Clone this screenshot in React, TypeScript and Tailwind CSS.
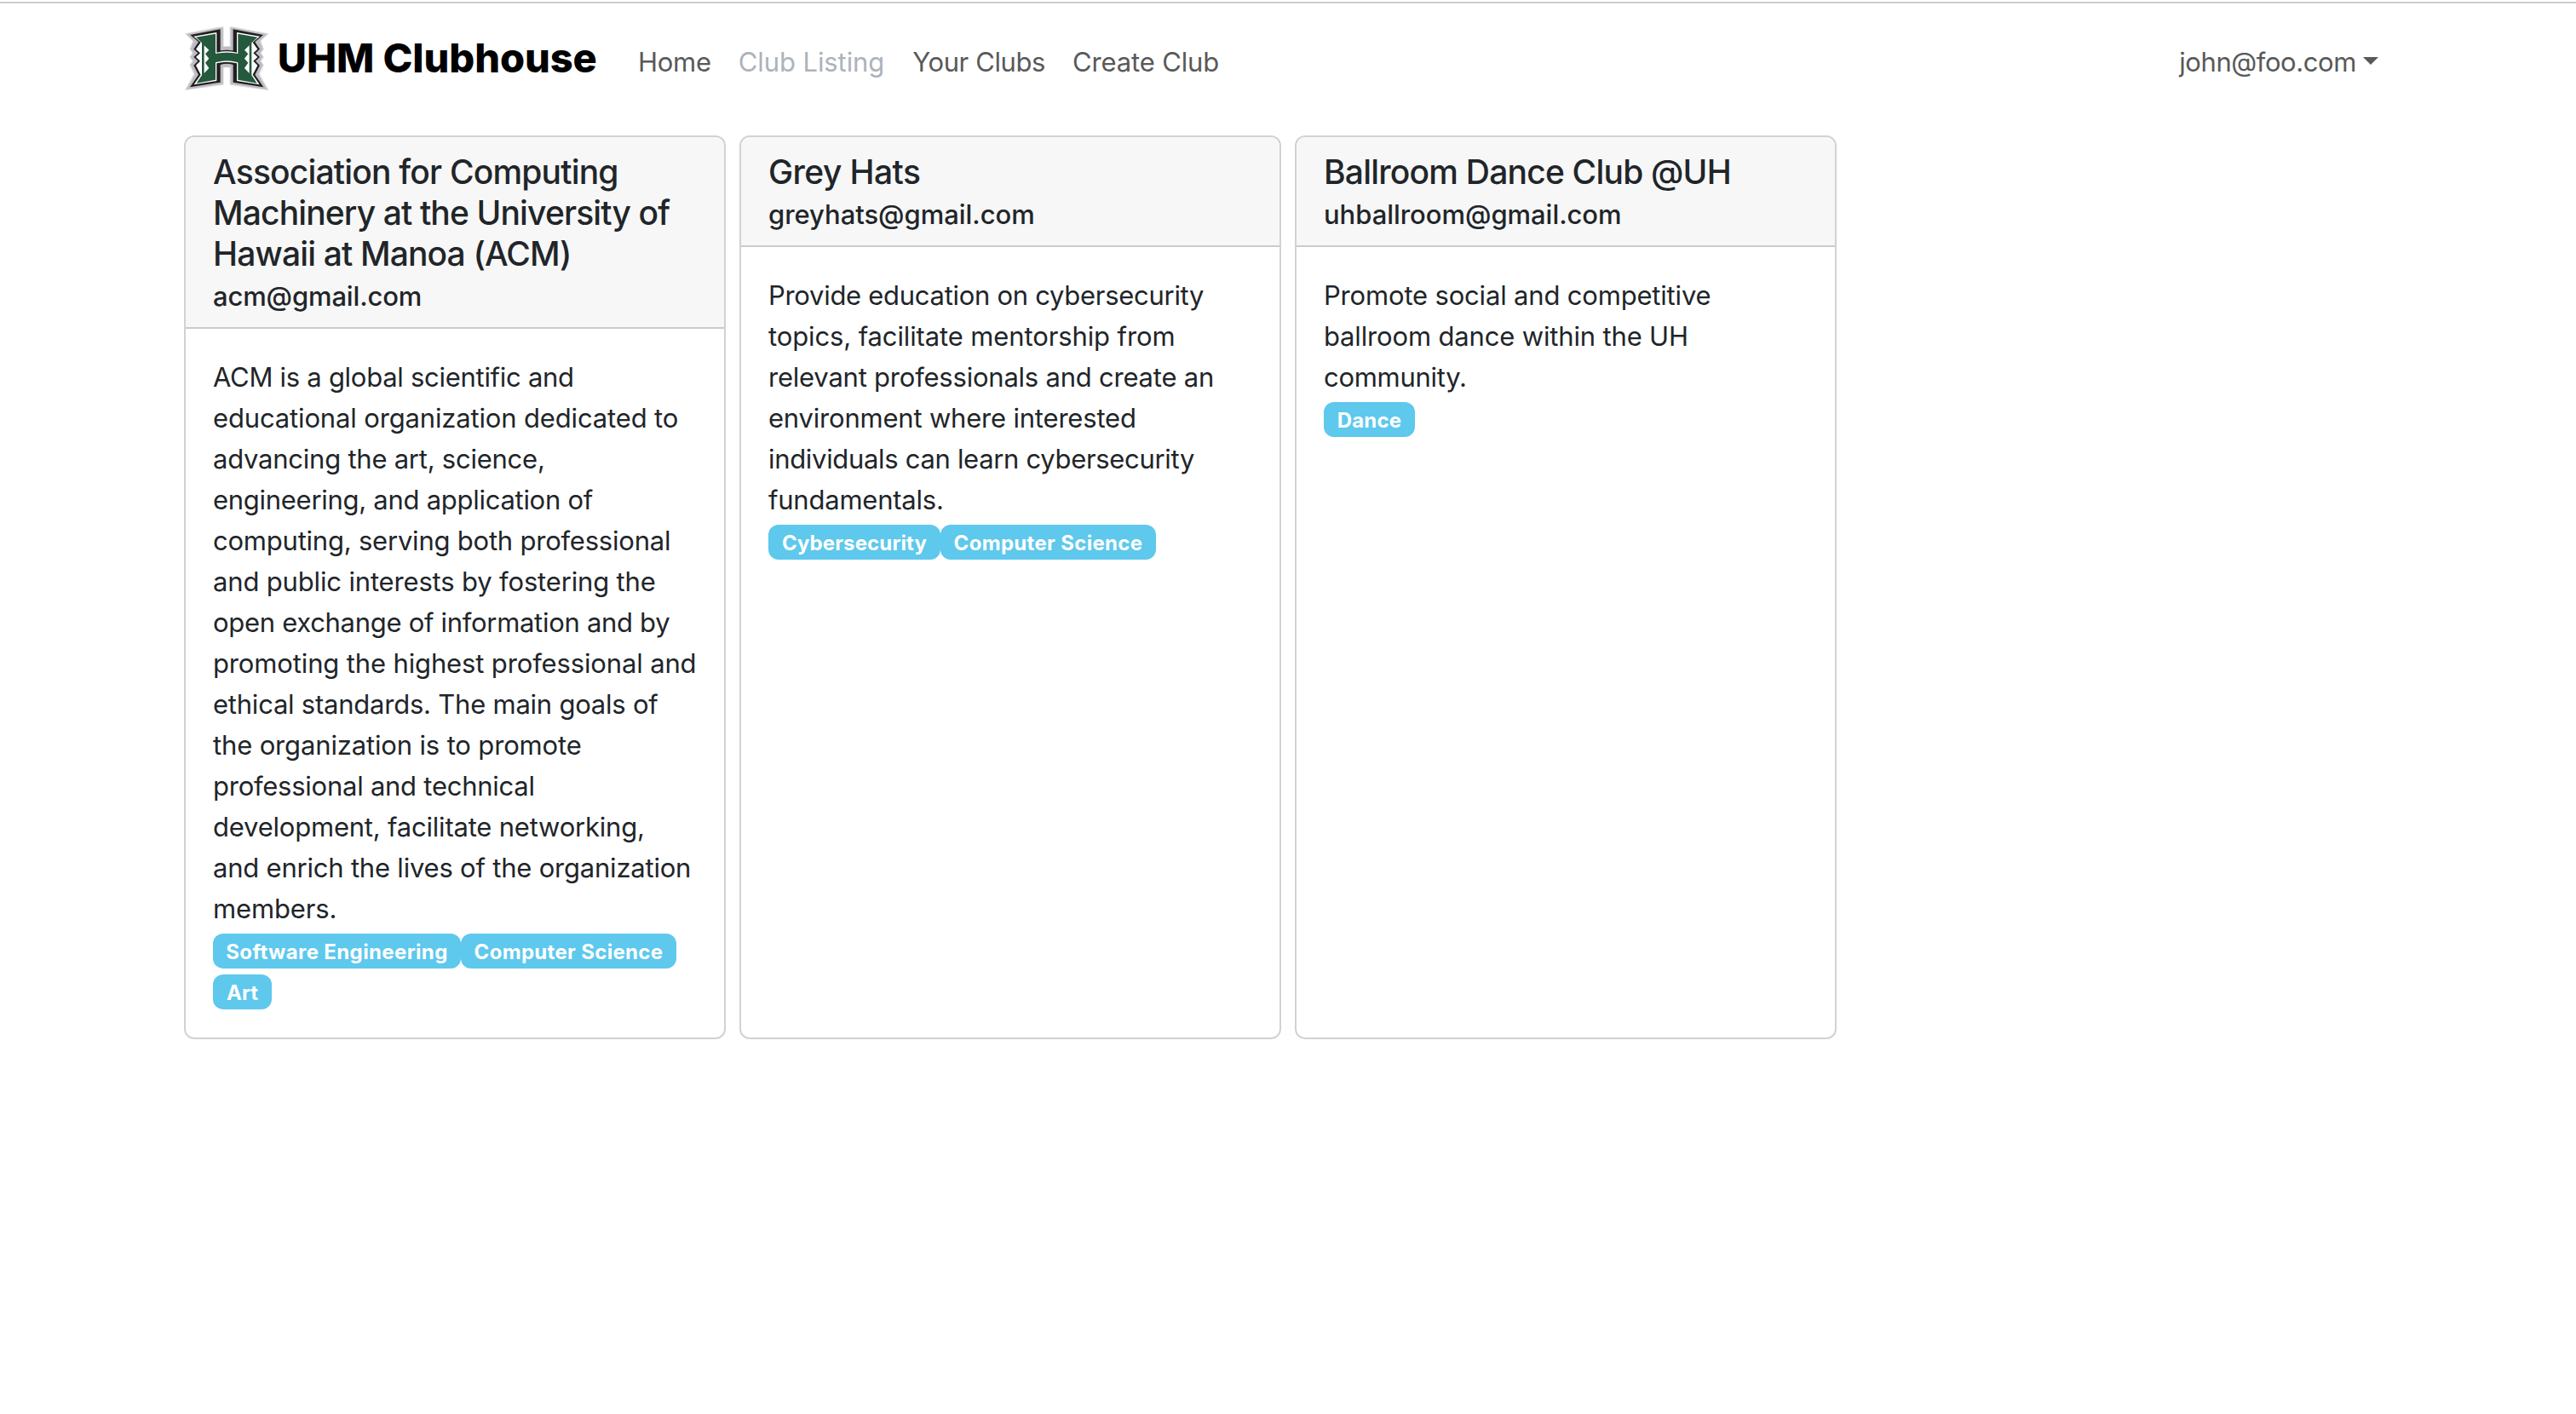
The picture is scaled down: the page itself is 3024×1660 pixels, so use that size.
type Line = { text: string; tracking: string };

type Club = {
  title: Line[];
  email: Line;
  body: Line[];
  tags: (Line & { width: string })[];
};

const clubs: Club[] = [
  {
    title: [
      { text: 'Association for Computing', tracking: 'tracking-[-0.81px]' },
      { text: 'Machinery at the University of', tracking: 'tracking-[-0.87px]' },
      { text: 'Hawaii at Manoa (ACM)', tracking: 'tracking-[-0.86px]' },
    ],
    email: { text: 'acm@gmail.com', tracking: 'tracking-[-0.14px]' },
    body: [
      { text: 'ACM is a global scientific and', tracking: 'tracking-[-0.28px]' },
      { text: 'educational organization dedicated to', tracking: 'tracking-[-0.15px]' },
      { text: 'advancing the art, science,', tracking: 'tracking-[-0.24px]' },
      { text: 'engineering, and application of', tracking: 'tracking-[-0.28px]' },
      { text: 'computing, serving both professional', tracking: 'tracking-[-0.22px]' },
      { text: 'and public interests by fostering the', tracking: 'tracking-[-0.16px]' },
      { text: 'open exchange of information and by', tracking: 'tracking-[-0.3px]' },
      { text: 'promoting the highest professional and', tracking: 'tracking-[-0.14px]' },
      { text: 'ethical standards. The main goals of', tracking: 'tracking-[-0.23px]' },
      { text: 'the organization is to promote', tracking: 'tracking-[-0.15px]' },
      { text: 'professional and technical', tracking: 'tracking-[-0.25px]' },
      { text: 'development, facilitate networking,', tracking: 'tracking-[-0.21px]' },
      { text: 'and enrich the lives of the organization', tracking: 'tracking-[-0.21px]' },
      { text: 'members.', tracking: 'tracking-[-0.14px]' },
    ],
    tags: [
      { text: 'Software Engineering', tracking: 'tracking-[0.37px]', width: 'w-[291px]' },
      { text: 'Computer Science', tracking: 'tracking-[0.32px]', width: 'w-[253px]' },
      { text: 'Art', tracking: 'tracking-[0.07px]', width: 'w-[69px]' },
    ],
  },
  {
    title: [{ text: 'Grey Hats', tracking: 'tracking-[-0.58px]' }],
    email: { text: 'greyhats@gmail.com', tracking: 'tracking-[-0.04px]' },
    body: [
      { text: 'Provide education on cybersecurity', tracking: 'tracking-[-0.29px]' },
      { text: 'topics, facilitate mentorship from', tracking: 'tracking-[-0.12px]' },
      { text: 'relevant professionals and create an', tracking: 'tracking-[-0.22px]' },
      { text: 'environment where interested', tracking: 'tracking-[-0.2px]' },
      { text: 'individuals can learn cybersecurity', tracking: 'tracking-[-0.32px]' },
      { text: 'fundamentals.', tracking: 'tracking-[-0.22px]' },
    ],
    tags: [
      { text: 'Cybersecurity', tracking: 'tracking-[0.12px]', width: 'w-[202px]' },
      { text: 'Computer Science', tracking: 'tracking-[0.32px]', width: 'w-[253px]' },
    ],
  },
  {
    title: [{ text: 'Ballroom Dance Club @UH', tracking: 'tracking-[-0.79px]' }],
    email: { text: 'uhballroom@gmail.com', tracking: 'tracking-[-0.04px]' },
    body: [
      { text: 'Promote social and competitive', tracking: 'tracking-[-0.18px]' },
      { text: 'ballroom dance within the UH', tracking: 'tracking-[-0.16px]' },
      { text: 'community.', tracking: 'tracking-[-0.28px]' },
    ],
    tags: [{ text: 'Dance', tracking: 'tracking-[0.22px]', width: 'w-[107px]' }],
  },
];

// Left half of each logo layer, back to front; every layer is mirrored to the right.
const logoLayers = [
  {
    fill: '#dededf',
    d: 'M188 95 L171 96 L50 119 L78 146 L67 174 L77 188 L67 202 L77 216 L67 230 L82 262 L50 320 L188 300 L188 240 L200 239 L200 163 L188 163 Z',
  },
  {
    fill: '#bdbcc2',
    d: 'M185 98 L172 99 L57 121 L82 146 L71 174 L81 188 L71 202 L81 216 L71 230 L87 262 L56 316 L185 297 L185 237 L200 236 L200 166 L185 166 Z',
  },
  {
    fill: '#231f20',
    d: 'M176 104 L70 124 L99 149 L82 174 L97 188 L82 202 L97 216 L82 231 L99 264 L69 308 L176 291 L176 229 Q188 225 200 225 L200 177 Q188 177 176 179 Z',
  },
  {
    fill: '#ffffff',
    d: 'M163 115 L82 129 L107 150 L90 174 L105 188 L90 202 L105 216 L90 231 L107 264 L83 299 L163 286 L163 224 Q181 219 200 219 L200 182 Q181 182 163 186 Z',
  },
  {
    fill: '#24593d',
    d: 'M159 120 L90 132 L111 152 L111 266 L92 294 L159 282 L159 221 Q180 215 200 215 L200 186 Q180 186 159 190 Z',
  },
  {
    fill: '#ffffff',
    d: 'M119 161 L136 177 L123 191 L136 207 L123 222 L136 241 L119 259 Z',
  },
];

function Logo() {
  return (
    <svg viewBox="45 85 307 245" className="h-[81.67px] w-[102.33px] shrink-0">
      {logoLayers.map((layer) => (
        <g key={layer.d} fill={layer.fill}>
          <path d={layer.d} />
          <path d={layer.d} transform="translate(397 0) scale(-1 1)" />
        </g>
      ))}
    </svg>
  );
}

function ClubCard({ club }: { club: Club }) {
  return (
    <article className="w-[636px] overflow-hidden rounded-[12px] border-2 border-[#d2d2d2] bg-white">
      <header className="border-b-2 border-[#cbcbcb] bg-[#f7f7f7] px-8 pt-[17px] pb-[15px]">
        <h5 className="text-[39px] leading-[48px] font-medium">
          {club.title.map((l) => (
            <span key={l.text} className={`block ${l.tracking}`}>
              {l.text}
            </span>
          ))}
        </h5>
        <h6 className={`h-[47px] pt-[2px] text-[31px] leading-[48px] font-medium ${club.email.tracking}`}>
          {club.email.text}
        </h6>
      </header>
      <div className="px-8 pt-[33px] pb-8">
        <p className="-mb-px text-[31px] leading-[48px]">
          {club.body.map((l) => (
            <span key={l.text} className={`block ${l.tracking}`}>
              {l.text}
            </span>
          ))}
        </p>
        <div className="flex flex-wrap">
          {club.tags.map((t) => (
            <div key={t.text} className="h-12 pt-[6px]">
              <span
                className={`flex h-[41px] items-center justify-center rounded-[12px] bg-[#5ec8ed] pt-[2px] text-[24px] leading-6 font-bold text-white ${t.width} ${t.tracking}`}
              >
                {t.text}
              </span>
            </div>
          ))}
        </div>
      </div>
    </article>
  );
}

export default function App() {
  return (
    <div className="min-h-[1660px] bg-white pt-[2px] font-['Inter',sans-serif] whitespace-nowrap text-[#212529]">
      <nav className="flex h-[132px] items-center border-t-2 border-[#cccccc] pr-[232px] pl-[215px] text-[31px] leading-[48px] text-[#595959]">
        <a className="flex w-[534px] items-center">
          <Logo />
          <span className="mb-[3px] ml-[8.5px] text-[47px] leading-[56px] font-extrabold tracking-[-0.09px] text-black">
            UHM Clubhouse
          </span>
        </a>
        <div className="mt-[7px] flex gap-8">
          <a className="tracking-[-0.26px]">Home</a>
          <a className="tracking-[-0.1px] text-[#acb3ba]">Club Listing</a>
          <a className="ml-px tracking-[-0.4px]">Your Clubs</a>
          <a className="tracking-[-0.15px]">Create Club</a>
        </div>
        <button className="mt-[7px] ml-auto flex items-center gap-2 tracking-[-0.42px]">
          john@foo.com
          <span className="mb-[2px] border-x-[9.5px] border-t-[9.5px] border-x-transparent border-t-[#595959]" />
        </button>
      </nav>
      <main className="mt-[25px] flex gap-4 pl-[216px]">
        {clubs.map((club) => (
          <ClubCard key={club.email.text} club={club} />
        ))}
      </main>
    </div>
  );
}
